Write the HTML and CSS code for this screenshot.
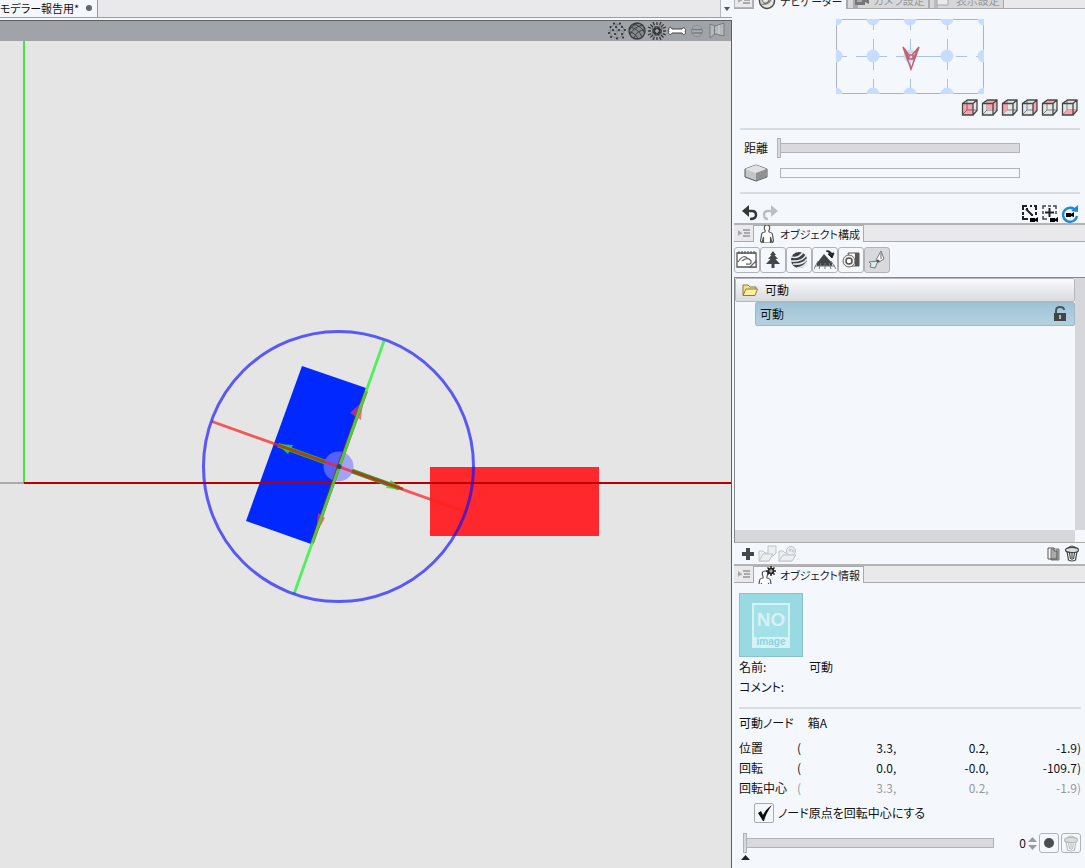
FILE: index.html
```html
<!DOCTYPE html>
<html lang="ja">
<head>
<meta charset="utf-8">
<title>モデラー報告用</title>
<link rel="stylesheet" href="styles.css">
</head>
<body>
<svg class="defs" width="0" height="0" aria-hidden="true">
  <defs>
    <linearGradient id="paper" x1="0" x2="1"><stop offset="0" stop-color="#fff"/><stop offset="1" stop-color="#cfd3d3"/></linearGradient>
    <g id="dot"><circle r="6.5" fill="#c8dcff"/></g>
    <g id="cube">
      <path d="M2 5 7 2H17V13L13 17H2Z" fill="#e2e7e6"/>
      <path d="M7 2V12H17M7 12 2 17" fill="none" stroke="#7d8282"/>
    </g>
    <path id="cube-edges" d="M2.5 5.500H13V17H2.500ZM2.500 5.500 7.500 2H17V12.500L13 17M13 5.500 17 2" fill="none" stroke="#454848" stroke-width="1.300"/>
    <g id="menu" fill="#a9aaab"><path d="M0 2 4 5 0 8Z"/><path d="M5 1H12V3H5ZM6 4H12V6H6ZM5 7H12V9H5ZM1 5h3v1H1z"/></g>
    <path id="person" d="M8 1C5.500 1 5 3 5.500 5 6 6.500 6.500 7 6 8 3 8.500 2.500 9 2.500 11L1.500 17 3 19 4.500 13V19H11.500V13L13 19 14.500 17 13.500 11C13.500 9 13 8.500 10 8 9.500 7 10 6.500 10.500 5 11 3 10.500 1 8 1Z" fill="#fff" stroke="#555" stroke-width="1.200"/>
    <g id="trash" stroke-width="1.200">
      <path d="M3 6 4.500 15Q8 17 11.500 15L13 6Z" fill="#fff"/>
      <path d="M5.500 8 6.500 14M8 8V15M10.500 8 9.500 14"/>
      <ellipse cx="8" cy="5" rx="6.500" ry="2.600" fill="#ddd"/><path d="M3.500 3.500Q8-1.500 12.500 3.500" fill="none"/>
    </g>
    <path id="cam" d="M0 1H5V2L8 0V5L5 4V5H0Z"/>
  </defs>
</svg>
<div class="app">
  <main class="workspace">
    <div class="doc-bar">
      <div class="doc-tab">モデラー報告用*<span class="unsaved"></span></div>
      <button class="doc-menu" aria-label="ファイル一覧"><svg width="6" height="4"><path d="M0 0H6L3 4Z" fill="#555"/></svg></button>
    </div>
    <div class="view-bar">
      <button aria-label="点表示"><svg width="20" height="20"><circle cx="10" cy="10" r="7" fill="none" stroke="#7e8285"/><path d="M3 10H17M10 3V17" stroke="#85898c"/><g fill="#25282a"><circle cx="7" cy="2.500" r="1"/><circle cx="13" cy="2.500" r="1"/><circle cx="3.500" cy="6" r="1"/><circle cx="9" cy="6" r="1"/><circle cx="15" cy="6" r="1"/><circle cx="6" cy="9" r="1"/><circle cx="12" cy="9" r="1"/><circle cx="18" cy="9" r="1"/><circle cx="2" cy="12" r="1"/><circle cx="8" cy="13" r="1"/><circle cx="15" cy="13" r="1"/><circle cx="4" cy="16" r="1"/><circle cx="10" cy="17.500" r="1"/><circle cx="16" cy="16.500" r="1"/></g></svg></button>
      <button aria-label="ワイヤーフレーム"><svg width="20" height="20" fill="none" stroke="#3c4042"><circle cx="10" cy="10" r="8" fill="#858a8d" stroke-width="1.400"/><path d="M3 6Q12 8 15 16M6 3Q15 5 17.500 12M2 11Q8 11 11 18M16 4Q6 6 3 14M18 9Q10 9 7 17M12 2Q5 4 2.500 9"/></svg></button>
      <button aria-label="法線"><svg width="20" height="20" stroke="#34383a" stroke-width="1.300" stroke-dasharray="3 1 4"><path d="M10 8V1M10 12V19M8 10H1M12 10H19M9 9 3 3M11 11 17 17M11 9 17 3M9 11 3 17M9 8 6 1M11 8 14 1M8 9 1 6M8 11 1 14M12 9 19 6M12 11 19 14M9 12 6 19M11 12 14 19"/></svg></button>
      <button aria-label="ボーン"><svg width="20" height="20"><path d="M5 8C4 5 1 6 2 9 0 9 1 10 2 10 0 13 4 15 5 12H15C16 15 20 13 18 10 20 8 16 5 15 8Z" fill="#fff" stroke="#454545"/></svg></button>
      <button aria-label="物理"><svg width="20" height="20" fill="none"><circle cx="10" cy="10" r="5.500" fill="#a9adb0" stroke="#84888b"/><path d="M5 8.500H15M5 12H15" stroke="#777c7f" stroke-width="1.500"/></svg></button>
      <button aria-label="背景"><svg width="20" height="20"><path d="M3 3 8 5 17 2V15L8 13 3 17Z" fill="#b4b8bb" stroke="#777c7f"/><path d="M7.500 4.500V14" stroke="#777c7f"/><path d="M12 4V13" stroke="#d0d3d5"/></svg></button>
    </div>
    <svg class="scene" role="img" aria-label="3Dビュー">
      <g transform="translate(0 -41)">
        <path d="M0 483H24" stroke="#aaa" stroke-width="2"/>
        <path d="M24 41V483" stroke="#10e510" stroke-width="1.500"/>
        <path d="M302 366 366 388 311 544 246 521Z" fill="#0028ff"/>
        <path d="M430 467H599V536H430Z" fill="#ff282c"/>
        <svg class="axis"><line x1="24" y1="483" x2="100%" y2="483" stroke="#b80000" stroke-width="2"/></svg>
        <circle cx="338.500" cy="466.500" r="15" fill="#8080ff" fill-opacity=".65"/>
        <path d="M366 391 339 466 312 543" stroke="#a51d2c" stroke-width="4" fill="none" opacity=".75"/>
        <path d="M363 401 350 413 361 420ZM316 534 318 513 325 518Z" fill="#f53c42" opacity=".65"/>
        <path d="M278 445 325 462M352 471 399 488" stroke="#22ac45" stroke-width="5"/>
        <path d="M277 444 293 445 288 454ZM404 490 391 480 386 488Z" fill="#35dc35" opacity=".8"/>
        <path d="M384 341 294 594" stroke="#28f238" stroke-width="2.800" opacity=".78"/>
        <path d="M212 421.500 466 512" stroke="#ff2020" stroke-width="2.800" opacity=".72"/>
        <path d="M278 445 325 462M352 471 403 489" stroke="#a64512" stroke-width="2.500"/>
        <circle cx="339" cy="466.500" r="2.500" fill="#304a43"/>
        <circle cx="338.500" cy="466.500" r="135" fill="none" stroke="#1010ff" stroke-opacity=".66" stroke-width="3"/>
      </g>
    </svg>
  </main>

  <aside class="palettes">
    <section class="navigator">
      <div class="tab-strip cropped">
        <button class="strip-menu" aria-label="メニュー"><svg width="12" height="10"><use href="#menu"/></svg></button>
        <button class="tab active"><svg width="20" height="20"><circle cx="10" cy="10" r="7.500" fill="#e4e4e2" stroke="#484a4a" stroke-width="1.500"/><path d="M4 13Q13 15 15 5M8 5Q14 7 11 11 7 14 5 9" fill="none" stroke="#777" stroke-width="1.200"/></svg>ナビゲーター</button>
        <button class="tab"><svg width="20" height="16"><path d="M2 0H7V16H2Z" fill="#aaa"/><path d="M4 3H14V13H4ZM14 7 18 4V12L14 10Z" fill="#777"/><path d="M6 6H11V10H6Z" fill="#aaa"/></svg>カメラ設定</button>
        <button class="tab"><svg width="20" height="16"><path d="M1 0H5V16H1Z" fill="#bbb"/><path d="M4 2H15V13H4Z" fill="#e9e9eb" stroke="#aaa"/></svg>表示設定</button>
      </div>
      <div class="nav-body">
        <svg class="nav-map" width="148" height="75" aria-label="カメラ操作">
          <rect x=".5" y=".5" width="147" height="74" fill="none" stroke="#b0b2b4"/>
          <path d="M37.500 0V75M74.500 0V75M111.500 0V75" stroke="#a8c2e8" stroke-dasharray="11 9"/>
          <path d="M0 37.500H148" stroke="#a8c2e8" stroke-dasharray="11 9 31 9"/>
          <use href="#dot" x="0" y="0"/><use href="#dot" x="37" y="0"/><use href="#dot" x="74" y="0"/><use href="#dot" x="111" y="0"/><use href="#dot" x="148" y="0"/>
          <use href="#dot" x="0" y="37"/><use href="#dot" x="37" y="37"/><use href="#dot" x="74" y="37"/><use href="#dot" x="111" y="37"/><use href="#dot" x="148" y="37"/>
          <use href="#dot" x="0" y="75"/><use href="#dot" x="37" y="75"/><use href="#dot" x="74" y="75"/><use href="#dot" x="111" y="75"/><use href="#dot" x="148" y="75"/>
          <path d="M67 28 75 50 83 28 76 36H73ZM67 28 73 40H77L83 28M73 36V40M77 36V40" fill="none" stroke="#c96065" stroke-width="1.500"/>
        </svg>
        <div class="cubes">
          <button aria-label="正面"><svg width="20" height="20"><use href="#cube"/><path d="M2 5H13V17H2Z" fill="#fba4ac"/><path d="M7 5V12H13M7 12 2 17" fill="none" stroke="#925b60"/><use href="#cube-edges"/></svg></button>
          <button aria-label="背面"><svg width="20" height="20"><use href="#cube"/><path d="M7 2H17V12H7Z" fill="#fba4ac"/><use href="#cube-edges"/></svg></button>
          <button aria-label="左"><svg width="20" height="20"><use href="#cube"/><path d="M2 5 7 2V12L2 17Z" fill="#fba4ac"/><use href="#cube-edges"/></svg></button>
          <button aria-label="右"><svg width="20" height="20"><use href="#cube"/><path d="M13 5 17 2V12L13 17Z" fill="#fba4ac"/><use href="#cube-edges"/></svg></button>
          <button aria-label="上"><svg width="20" height="20"><use href="#cube"/><path d="M2 5 7 2H17L13 5Z" fill="#fba4ac"/><use href="#cube-edges"/></svg></button>
          <button aria-label="下"><svg width="20" height="20"><use href="#cube"/><path d="M2 17 7 12H17L13 17Z" fill="#fba4ac"/><use href="#cube-edges"/></svg></button>
        </div>
        <hr>
        <div class="slide-rows">
          <label for="distance">距離</label>
          <input id="distance" type="range" min="0" max="100" value="0">
          <label for="perspective"><svg width="24" height="18" aria-label="パース"><path d="M1 5 12 1 23 5V13L12 17 1 13Z" fill="#c5c6c7" stroke="#555"/><path d="M1 5 12 1 23 5 12 9Z" fill="#e0e2e3"/><path d="M12 9 22.500 5V13L12 16.500Z" fill="#8f9192"/></svg></label>
          <input id="perspective" class="empty" type="range" min="0" max="100" value="0">
        </div>
        <hr>
        <div class="nav-tools">
          <button aria-label="元に戻す"><svg width="20" height="20"><path d="M2 8 9 2V14Z" fill="#363838"/><path d="M8 8H12Q16 8 16 12 16 16 10 16" fill="none" stroke="#363838" stroke-width="2.500"/></svg></button>
          <button aria-label="やり直し"><svg width="20" height="20"><path d="M18 8 11 2V14Z" fill="#bcbfc1"/><path d="M12 8H8Q4 8 4 12 4 16 8 16" fill="none" stroke="#bcbfc1" stroke-width="2.500"/></svg></button>
          <span class="spacer"></span>
          <button aria-label="全体表示"><svg width="20" height="20"><path d="M3 7V3H7M10 3H12M14 3H16V7M16 9V12M3 9V12M3 13V16H8" fill="none" stroke="#222" stroke-width="2"/><path d="M6 6 12 12M6 6H8M11 12H13" stroke="#222" stroke-width="2"/><use href="#cam" x="10" y="14"/></svg></button>
          <button aria-label="選択を表示"><svg width="20" height="20"><path d="M3 6V3H6M8 3H11M13 3H16V6M16 8V11M3 8V11M3 13V16H7" fill="none" stroke="#444" stroke-width="1.500"/><path d="M9.500 5V14M5 9.500H14" stroke="#222" stroke-width="2"/><use href="#cam" x="10" y="14"/></svg></button>
          <button aria-label="カメラをリセット"><svg width="20" height="20"><path d="M16 8A7 7 0 1 0 17 13" fill="none" stroke="#2388dc" stroke-width="2.400"/><path d="M11 8 18 2V9Z" fill="#2388dc"/><use href="#cam" x="6" y="9"/></svg></button>
        </div>
      </div>
    </section>

    <section class="structure">
      <div class="tab-strip">
        <button class="strip-menu" aria-label="メニュー"><svg width="12" height="10"><use href="#menu"/></svg></button>
        <button class="tab active"><svg width="20" height="18" viewBox="-2 1 20 18"><use href="#person"/></svg>オブジェクト構成</button>
      </div>
      <div class="kinds">
        <button aria-label="すべて"><svg width="22" height="20"><path d="M1 3H20V17H1Z" fill="#fff" stroke="#555" stroke-width="1.300"/><path d="M3 1V4M6 1V4M9 1V4M12 1V4M15 1V4M18 1V4" stroke="#555"/><path d="M2 12Q8 3 12 9M6 11Q12 6 15 11Q16 15 10 14M14 17 20 11V17Z" fill="#fff" stroke="#666" stroke-width="1.300"/></svg></button>
        <button aria-label="3D素材"><svg width="20" height="20"><path d="M10 1 13 5H11.500L15 9H12.500L17 14H11.500V18H8.500V14H3L7.500 9H5L8.500 5H7Z" fill="#444848"/></svg></button>
        <button aria-label="プリミティブ"><svg width="20" height="20"><circle cx="10" cy="10" r="8" fill="#3e4142"/><path d="M2 7Q10 9 14 2M2 11Q14 12 17 5M4 14Q14 15 18 9M8 18Q15 17 18 12" fill="none" stroke="#e5e8eb" stroke-width="1.600"/></svg></button>
        <button aria-label="床"><svg width="22" height="22"><path d="M3 14 10 5 18 14V17H3Z" fill="#424547"/><path d="M0 20 4 12M5 20 7 14M11 20V14M17 20 15 14M22 20 17 12M1 17H21" stroke="#777"/><path d="M12 2Q17 1 18 6M14 5 18 9 20 4Z" fill="#222" stroke="#222"/></svg></button>
        <button aria-label="カメラ"><svg width="20" height="20"><path d="M7 3H18V16H10Z" fill="#fff" stroke="#555"/><path d="M14 3H18V16H14Z" fill="#555"/><circle cx="8" cy="11" r="6" fill="#eee" stroke="#666"/><circle cx="8" cy="11" r="3" fill="#fff" stroke="#555" stroke-width="1.500"/></svg></button>
        <button class="on" aria-label="可動"><svg width="20" height="20"><path d="M9 10 14 1 17 9 12 12Z" fill="#fff" stroke="#777"/><path d="M14 3V9" stroke="#666"/><path d="M11 11 8 18 3 17 4 14 2 12Z" fill="#d9eef1" stroke="#777"/><circle cx="11" cy="11" r="1.500" fill="#555"/></svg></button>
      </div>
      <div class="tree">
        <ul>
          <li class="folder"><svg width="16" height="14"><path d="M1 12V2H6L8 4H14V6" fill="#f6df84" stroke="#897b40"/><path d="M1 12.500 4 6H15.500L13 12.500Z" fill="#ffeda0" stroke="#897b40"/></svg>可動</li>
          <li class="node"><span>可動</span><svg width="14" height="16"><path d="M3 8V5Q3 1 7 1 11 1 11 4" fill="none" stroke="#4b565b" stroke-width="2"/><path d="M1 7H13V15H1Z" fill="#414547"/><path d="M6 9H8V13H6Z" fill="#adb9bf"/></svg></li>
        </ul>
        <div class="scroll-y"></div>
        <div class="scroll-x"></div>
        <div class="corner"></div>
      </div>
      <div class="tree-tools">
        <button aria-label="追加"><svg width="20" height="20"><path d="M8 4H12V8H16V12H12V16H8V12H4V8H8Z" fill="#444849"/></svg></button>
        <button aria-label="フォルダーから追加"><svg width="20" height="20" fill="#eceef0" stroke="#c0c3c6"><path d="M1 17V7H5L7 9H14L11 17Z"/><path d="M10 2H18V9L15 12H10Z"/><path d="M1 17 5 10H15L11 17Z"/></svg></button>
        <button aria-label="人物を追加"><svg width="20" height="20" fill="#eceef0" stroke="#c0c3c6"><path d="M1 17V7H5L7 9H14V17Z"/><circle cx="13" cy="7" r="4.500"/><circle cx="12" cy="6" r="1"/><circle cx="15" cy="7" r="1"/><path d="M1 17 5 11H18L14 17Z"/></svg></button>
        <span class="spacer"></span>
        <button aria-label="複製"><svg width="20" height="20"><path d="M7 5H15V16H7Z" fill="#aaa" stroke="#777"/><path d="M4 4H10L13 7V15H4Z" fill="url(#paper)" stroke="#555"/><path d="M10 4V7H13" fill="#fff" stroke="#555"/></svg></button>
        <button aria-label="削除"><svg width="16" height="17" stroke="#454848"><use href="#trash"/></svg></button>
      </div>
    </section>

    <section class="info">
      <div class="tab-strip">
        <button class="strip-menu" aria-label="メニュー"><svg width="12" height="10"><use href="#menu"/></svg></button>
        <button class="tab active"><svg width="20" height="18" viewBox="0 0 20 18"><g transform="translate(0 4)"><use href="#person"/></g><path d="M14 0V10M9 5H19M10.500 1.500 17.500 8.500M17.500 1.500 10.500 8.500" stroke="#222" stroke-width="1.500"/><circle cx="14" cy="5" r="2.500" fill="#aaa" stroke="#222" stroke-width="1.500"/></svg>オブジェクト情報</button>
      </div>
      <div class="info-body">
        <svg class="thumb" width="64" height="64" aria-label="NO image">
          <rect x=".5" y=".5" width="63" height="63" fill="#98d9e2" stroke="#8fbfc8"/>
          <rect x="14" y="11" width="36" height="43" fill="#a4e0e8" stroke="#d5f2f5" stroke-width="2"/>
          <path d="M14 44H50V54H14Z" fill="#d5f2f5"/>
          <text x="32" y="33" class="thumb-no">NO</text>
          <text x="32" y="52" class="thumb-image">image</text>
        </svg>
        <dl>
          <dt>名前:</dt><dd>可動</dd>
          <dt>コメント:</dt><dd></dd>
        </dl>
        <hr>
        <div class="node-name"><span>可動ノード</span><span>箱A</span></div>
        <table>
          <tr><th scope="row">位置</th><td class="open">(</td><td>3.3,</td><td>0.2,</td><td>-1.9)</td></tr>
          <tr><th scope="row">回転</th><td class="open">(</td><td>0.0,</td><td>-0.0,</td><td>-109.7)</td></tr>
          <tr class="dim"><th scope="row">回転中心</th><td class="open">(</td><td>3.3,</td><td>0.2,</td><td>-1.9)</td></tr>
        </table>
        <label class="origin"><input type="checkbox" checked><svg class="tick" width="20" height="20"><path d="M4 10 7 8 9 12Q12 6 18 2 12 10 10 18H9Z" fill="#0c0c0c"/></svg>ノード原点を回転中心にする</label>
        <div class="pose">
          <div class="pose-slider">
            <input type="range" min="0" max="100" value="0" aria-label="ポーズ">
            <svg width="9" height="5"><path d="M0 5H9L4.500 0Z" fill="#222"/></svg>
          </div>
          <input class="amount" type="text" value="0" aria-label="値">
          <span class="spin">
            <button aria-label="増やす"><svg width="9" height="5"><path d="M0 5H9L4.500 0Z" fill="#999c9f"/></svg></button>
            <button aria-label="減らす"><svg width="9" height="5"><path d="M0 0H9L4.500 5Z" fill="#999c9f"/></svg></button>
          </span>
          <button class="square" aria-label="登録"><svg width="12" height="12"><circle cx="6" cy="6" r="5" fill="#4c4d4e"/></svg></button>
          <button class="square" aria-label="登録を削除"><svg width="16" height="17" stroke="#b9bcbf"><use href="#trash"/></svg></button>
        </div>
      </div>
    </section>
  </aside>
</div>
</body>
</html>
```

FILE: styles.css
```css
* { box-sizing: border-box; }

body {
  margin: 0;
  overflow: hidden;
  background: #f4f8fc;
  color: #111;
  font: 12px/20px "Noto Sans CJK JP", sans-serif;
  font-feature-settings: "palt";
}

button {
  display: flex;
  align-items: center;
  justify-content: center;
  padding: 0;
  border: 0;
  background: none;
  font: inherit;
  color: inherit;
}

svg { display: block; flex: none; }
.defs { display: none; }
.spacer { flex: 1; }

hr {
  width: 100%;
  height: 2px;
  margin: 0;
  border: 0;
  background: #d8dbdf;
}

.app {
  display: grid;
  grid-template-columns: minmax(0, 1fr) 353px;
  height: 100vh;
}

/* Document area */
.workspace {
  display: flex;
  flex-direction: column;
  min-width: 0;
}

.doc-bar {
  display: flex;
  justify-content: space-between;
  height: 18px;
  background: #e9e9eb;
  border-bottom: 1px solid #9b9da1;
}

.doc-tab {
  display: flex;
  align-items: center;
  gap: 7px;
  padding: 0 5px 2px 0;
  background: #f4f8fc;
  border-right: 1px solid #9b9da1;
  font-size: 11px;
  line-height: 14px;
}

.unsaved {
  width: 6px;
  height: 6px;
  border-radius: 50%;
  background: #666;
}

.doc-menu {
  width: 12px;
  background: #f4f8fc;
  border-left: 1px solid #b5b7ba;
}

.view-bar {
  display: flex;
  justify-content: flex-end;
  height: 21px;
  margin-top: 2px;
  padding-right: 4px;
  background: #a0a4a8;
  border-top: 1px solid #5e6062;
  border-right: 1px solid #5e6062;
}

.scene {
  flex: 1;
  width: 100%;
  min-height: 0;
  background: #e5e5e5;
  border-right: 1px solid #5e6062;
}

.axis { overflow: visible; }

/* Palettes */
.palettes {
  display: flex;
  flex-direction: column;
  min-width: 0;
  padding-left: 2px;
}

.tab-strip {
  display: flex;
  align-items: flex-end;
  height: 18px;
  background: #e9e9eb;
  border-top: 1px solid #b3b3b3;
  border-bottom: 1px solid #aaa;
}

.strip-menu {
  width: 19px;
  height: 16px;
}

.tab {
  position: relative;
  display: flex;
  gap: 3px;
  height: 16px;
  padding: 0 3px;
  border: 1px solid #a9abad;
  border-bottom: 0;
  background: #d6d7db;
  color: #999;
  font-size: 11px;
  line-height: 14px;
}

.tab.active {
  height: 17px;
  margin-bottom: -1px;
  background: #f4f8fc;
  color: #222;
}

.cropped {
  height: 9px;
  border-top: 0;
}

.cropped .tab { padding-bottom: 1px; margin-top: -10px; flex: none; }
.cropped .strip-menu { flex: none; border: 1px solid #b3b3b3; }

.nav-body {
  display: flex;
  flex-direction: column;
  align-items: center;
  padding: 10px 5px 0 6px;
}

.cubes {
  display: flex;
  align-self: flex-end;
  height: 34px;
  padding: 4px 0 10px;
}

.slide-rows {
  display: grid;
  grid-template-columns: 37px minmax(0, 1fr);
  row-gap: 5px;
  width: 100%;
  padding: 8px 60px 9px 0;
}

.slide-rows label {
  display: flex;
  align-items: center;
  padding-left: 4px;
  height: 20px;
}

input[type="range"] {
  appearance: none;
  width: 100%;
  height: 20px;
  margin: 0;
  background: linear-gradient(#d8dade, #d8dade) no-repeat 4px 6px / calc(100% - 5px) 8px,
    linear-gradient(#b1b3b6, #b1b3b6) no-repeat 3px 5px / calc(100% - 3px) 10px;
}

input[type="range"]::-webkit-slider-thumb {
  appearance: none;
  width: 4px;
  height: 20px;
  background: #d8dade;
  border: 1px solid #b1b3b6;
}

input.empty[type="range"] {
  background: linear-gradient(#f4f8fc, #f4f8fc) no-repeat 4px 6px / calc(100% - 5px) 8px,
    linear-gradient(#b1b3b6, #b1b3b6) no-repeat 3px 5px / calc(100% - 3px) 10px;
}

input.empty[type="range"]::-webkit-slider-thumb { visibility: hidden; }

.nav-tools {
  display: flex;
  width: 100%;
  padding-top: 9px;
}

.structure {
  display: flex;
  flex: 1;
  flex-direction: column;
  min-height: 0;
}

.kinds {
  display: flex;
  padding: 5px 0 4px;
}

.kinds button {
  width: 26px;
  height: 26px;
  border: 1px solid #b0b2b5;
  border-radius: 3px;
}

.kinds .on { background: #d8d9dd; }

.tree {
  display: grid;
  grid-template-columns: minmax(0, 1fr) 10px;
  grid-template-rows: minmax(0, 1fr) 12px;
  flex: 1;
  border-top: 1px solid #85888b;
  border-left: 1px solid #85888b;
  border-bottom: 1px solid #aaa;
}

.tree ul { margin: 0; padding: 0; list-style: none; }

.tree li {
  display: flex;
  align-items: center;
  height: 24px;
  border: 1px solid #b5b7bb;
  border-radius: 2px;
}

.folder {
  gap: 7px;
  padding-left: 6px;
  background: linear-gradient(#f9fbff, #d8dade);
}

.node {
  justify-content: space-between;
  margin-left: 20px;
  padding: 0 7px 0 4px;
  background: linear-gradient(#9fc4d7, #b5d1e0);
}

.tree li.node { border-color: #a0b8c8; }
.scroll-y, .scroll-x { background: #d6d7db; }

.tree-tools {
  display: flex;
  align-items: center;
  height: 21px;
  padding: 0 5px 0 4px;
}

.tree-tools button { height: 20px; }

.info .tab-strip, .structure .tab-strip {
  height: 19px;
  border-top: 2px solid #b3b3b3;
}

.info-body { padding: 10px 4px 8px 5px; }

.thumb-no, .thumb-image {
  font-family: "Liberation Sans", sans-serif;
  text-anchor: middle;
}
.thumb-no { font-size: 19px; font-weight: bold; fill: #d5f2f5; }
.thumb-image { font-size: 10px; font-weight: bold; fill: #8dd4de; }

dl {
  display: grid;
  grid-template-columns: 70px 1fr;
  grid-auto-rows: 20px;
  margin: 0 0 10px;
}

dd { margin: 0; }

.node-name {
  display: flex;
  gap: 14px;
  padding: 4px 0 5px;
}

table {
  width: 100%;
  border-collapse: collapse;
  table-layout: fixed;
}

th, td {
  height: 20px;
  padding: 0;
  font-weight: normal;
  text-align: right;
  line-height: 20px;
}

th { width: 58px; text-align: left; }
td.open { width: 7px; text-align: left; }
.dim td { color: #999; }

.origin {
  display: flex;
  align-items: center;
  gap: 4px;
  margin: 5px 0 10px 15px;
}

.origin input {
  appearance: none;
  width: 20px;
  height: 20px;
  margin: 0;
  border: 1px solid #aaa;
  border-radius: 2px;
}

.tick { margin-left: -24px; }

.pose {
  display: flex;
  align-items: flex-start;
  gap: 2px;
}

.pose-slider { flex: 1; padding-left: 4px; min-width: 0; }
.pose-slider svg { margin: 2px 0 0 -2px; }
.pose-slider input { display: block; }

.amount {
  width: 30px;
  height: 20px;
  padding: 0;
  border: 0;
  background: none;
  color: #111;
  font: inherit;
  text-align: right;
}

.spin {
  display: flex;
  flex-direction: column;
  gap: 3px;
  padding: 4px 0;
}

.square {
  width: 20px;
  height: 20px;
  border: 1px solid #b0b2b5;
  border-radius: 3px;
}
```
